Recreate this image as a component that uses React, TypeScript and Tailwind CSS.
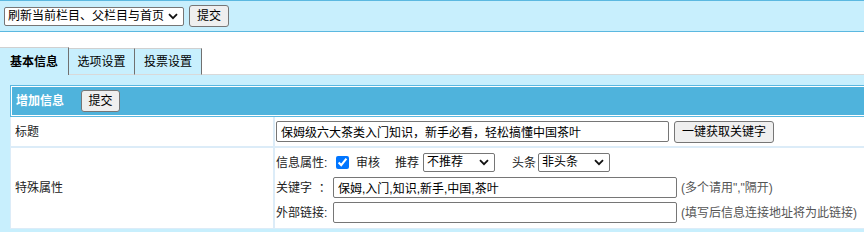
import React from 'react';

const font = { fontFamily: '"Liberation Sans", "Noto Sans CJK SC", sans-serif' };

const Chevron: React.FC = () => (
  <svg width="10" height="7" viewBox="0 0 10 7" className="shrink-0">
    <path d="M1 1.2 L5 5.2 L9 1.2" fill="none" stroke="#111" strokeWidth="1.8" />
  </svg>
);

// 下拉框：原生 select 去掉外观，右侧手画箭头
const Select: React.FC<{ value: string; w: string; options: string[] }> = ({ value, w, options }) => (
  <div className={`flex items-center h-[19px] bg-white border border-[#767676] rounded-[2px] pr-[5px] ${w}`}>
    <select
      defaultValue={value}
      className="appearance-none flex-1 min-w-0 h-full pl-[3px] bg-transparent outline-none text-[12px] leading-[17px] text-black"
    >
      {options.map((o) => (
        <option key={o}>{o}</option>
      ))}
    </select>
    <Chevron />
  </div>
);

const Btn: React.FC<{ children: React.ReactNode; w: string }> = ({ children, w }) => (
  <button className={`h-[22px] ${w} border border-[#767676] rounded-[3px] bg-[#efefef] text-[12px] text-black leading-none`}>
    {children}
  </button>
);

const Input: React.FC<{ value?: string; w: string }> = ({ value = '', w }) => (
  <input
    defaultValue={value}
    className={`h-[21px] ${w} border border-[#767676] rounded-[2px] bg-white px-[4px] text-[12px] text-black outline-none`}
  />
);

export default function App() {
  return (
    <div className="w-[864px] h-[232px] overflow-hidden bg-[#c8effd] text-[12px] text-[#222]" style={font}>
      {/* 顶部操作条 */}
      <div className="h-[32px] border-y border-[#5bb8e0] bg-[#c8effd] flex items-center pl-[4px] gap-[5px]">
        <Select value="刷新当前栏目、父栏目与首页" w="w-[180px]" options={['刷新当前栏目、父栏目与首页', '刷新当前栏目', '不刷新']} />
        <Btn w="w-[40px]">提交</Btn>
      </div>

      {/* 选项卡 */}
      <div className="h-[43px] bg-white flex items-end">
        <div className="w-[69px] h-[28px] bg-[#c8effd] border-t border-[#d0d0d0] border-r border-r-[#707070] font-bold text-black flex items-start justify-center pt-[5px]">
          基本信息
        </div>
        <div className="w-[66px] h-[27px] bg-[#c8effd] border-t border-[#d0d0d0] border-r border-r-[#707070] border-b border-b-[#d9d9d9] text-black flex items-center justify-center">
          选项设置
        </div>
        <div className="w-[67px] h-[27px] bg-[#c8effd] border-t border-[#d0d0d0] border-r border-r-[#707070] border-b border-b-[#d9d9d9] text-black flex items-center justify-center">
          投票设置
        </div>
        <div className="flex-1 border-b border-[#d9d9d9]" />
      </div>

      {/* 表单 */}
      <div className="pl-[10px] pt-[10px]">
        <div className="w-[880px]">
          <div className="border border-[#5bb8e0] bg-white p-px">
            <div className="h-[28px] bg-[#4fb3dc] flex items-center pl-[4px] gap-[17px]">
              <span className="font-bold text-white">增加信息</span>
              <Btn w="w-[39px]">提交</Btn>
            </div>
          </div>

          <div className="grid grid-cols-[262px_1fr] gap-[2px] bg-[#dcecf8] border-l border-[#dcecf8] pb-[1px]">
            <div className="h-[29px] bg-white flex items-center pl-[4px]">标题</div>
            <div className="h-[29px] bg-white flex items-center pl-[1px] gap-[5px]">
              <Input w="w-[393px] h-[20px]" value="保姆级六大茶类入门知识，新手必看，轻松搞懂中国茶叶" />
              <Btn w="w-[100px]">一键获取关键字</Btn>
            </div>

            <div className="h-[80px] bg-white flex items-center pl-[4px]">特殊属性</div>
            <div className="h-[80px] bg-white flex flex-col pl-[1px] pt-[5px] gap-[6px]">
              <div className="flex items-center h-[19px]">
                <span className="w-[60px]">信息属性:</span>
                <input type="checkbox" defaultChecked className="w-[13px] h-[13px] m-0 accent-[#0075ff]" />
                <span className="ml-[7px]">审核</span>
                <span className="ml-[15px]">推荐</span>
                <span className="ml-[4px]">
                  <Select value="不推荐" w="w-[72px]" options={['不推荐', '一级推荐', '二级推荐']} />
                </span>
                <span className="ml-[17px]">头条</span>
                <span className="ml-[2px]">
                  <Select value="非头条" w="w-[72px]" options={['非头条', '一级头条', '二级头条']} />
                </span>
              </div>
              <div className="flex items-center h-[21px] -mt-px">
                <span className="w-[57px]">关键字&nbsp;&nbsp;：</span>
                <Input w="w-[344px]" value="保姆,入门,知识,新手,中国,茶叶" />
                <span className="ml-[4px] text-[#555]">(多个请用","隔开)</span>
              </div>
              <div className="flex items-center h-[21px] -mt-[2px]">
                <span className="w-[57px]">外部链接:</span>
                <Input w="w-[344px]" />
                <span className="ml-[4px] text-[#555]">(填写后信息连接地址将为此链接)</span>
              </div>
            </div>
          </div>
        </div>
      </div>
    </div>
  );
}
